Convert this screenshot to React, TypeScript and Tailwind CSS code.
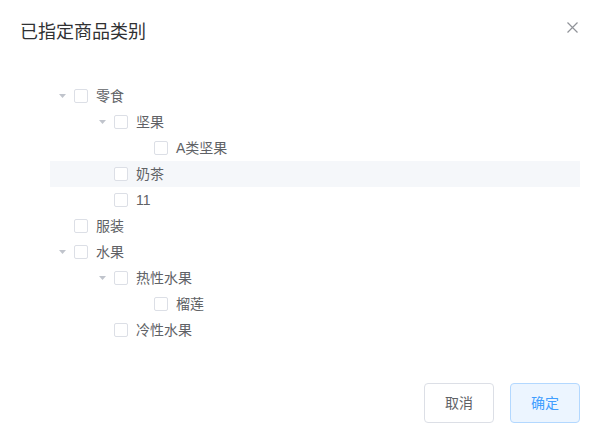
import React from "react";

type Node = { label: string; level: number; expandable: boolean; highlight?: boolean };

const nodes: Node[] = [
  { label: "零食", level: 0, expandable: true },
  { label: "坚果", level: 1, expandable: true },
  { label: "A类坚果", level: 2, expandable: false },
  { label: "奶茶", level: 1, expandable: false, highlight: true },
  { label: "11", level: 1, expandable: false },
  { label: "服装", level: 0, expandable: false },
  { label: "水果", level: 0, expandable: true },
  { label: "热性水果", level: 1, expandable: true },
  { label: "榴莲", level: 2, expandable: false },
  { label: "冷性水果", level: 1, expandable: false },
];

const indentClass = ["pl-0", "pl-[40px]", "pl-[80px]"];

function Caret({ show }: { show: boolean }) {
  return (
    <span className="w-[24px] h-[26px] flex items-center justify-center">
      {show && (
        <svg width="7" height="4" viewBox="0 0 7 4">
          <path d="M0 0 L7 0 L3.5 4 Z" fill="#c0c4cc" />
        </svg>
      )}
    </span>
  );
}

export default function App() {
  return (
    <div
      className="w-[598px] h-[441px] bg-white flex flex-col"
      style={{ fontFamily: '"Liberation Sans", "Noto Sans CJK SC", sans-serif' }}
    >
      <div className="relative pt-[20px] px-[20px] pb-[10px]">
        <div className="text-[18px] leading-[24px] text-[#303133]">已指定商品类别</div>
        <button className="absolute top-[21px] right-[20px] w-[12px] h-[12px] flex items-center justify-center">
          <svg width="11" height="11" viewBox="0 0 11 11">
            <path d="M0.5 0.5 L10.5 10.5 M10.5 0.5 L0.5 10.5" stroke="#909399" strokeWidth="1.2" />
          </svg>
        </button>
      </div>
      <div className="pt-[29px] pb-[30px] pl-[50px] pr-[18px]">
        {nodes.map((n, i) => (
          <div
            key={i}
            className={`h-[26px] flex items-center ${indentClass[n.level]} ${n.highlight ? "bg-[#f5f7fa]" : ""}`}
          >
            <Caret show={n.expandable} />
            <span className="w-[14px] h-[14px] border border-[#dcdfe6] rounded-[2px] bg-white box-border" />
            <span className="ml-[8px] text-[14px] text-[#606266] leading-[26px]">{n.label}</span>
          </div>
        ))}
      </div>
      <div className="pt-[10px] pr-[18px] flex justify-end gap-[16px]">
        <button className="h-[40px] px-[20px] border border-[#dcdfe6] rounded-[4px] bg-white text-[14px] text-[#606266] leading-none">
          取消
        </button>
        <button className="h-[40px] px-[20px] border border-[#b3d8ff] rounded-[4px] bg-[#ecf5ff] text-[14px] text-[#409eff] leading-none">
          确定
        </button>
      </div>
    </div>
  );
}
